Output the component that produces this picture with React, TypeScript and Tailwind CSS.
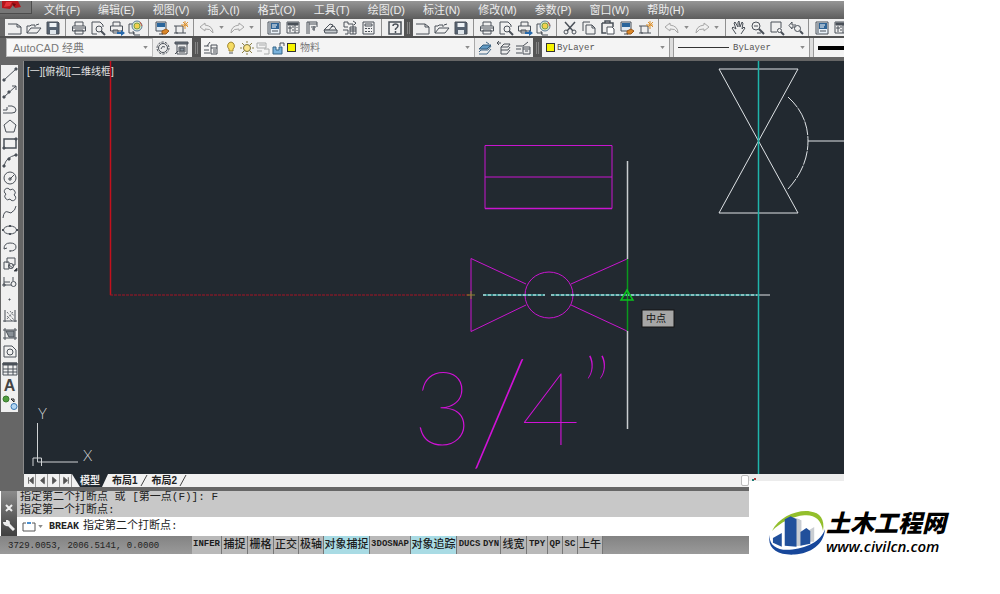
import type { ReactNode } from 'react';

const INK = '#4a5058';

const icons: Record<string, ReactNode> = {
  new: <path d="M1 4h9l4 3v7H1M10 4v3h4" />,
  open: <path d="M1 13V6h3l1-1h4v2M1 13l4-5h10l-4 5zM10 5l3-1" />,
  save: (
    <>
      <path d="M2 2h11l1 1v11H2z" fill="#566270" />
      <path d="M4.500 3h7v4h-7z" fill="#eef2f5" stroke="none" />
      <path d="M5 10h6v4H5z" fill="#dfe5ea" stroke="none" />
    </>
  ),
  print: (
    <>
      <path d="M4 6V2h8v4M1.500 7q0-1 1-1h11q1 0 1 1v4h-13zM4 10h8v4H4z" />
      <path d="M2 8h12" />
    </>
  ),
  preview: (
    <>
      <path d="M2 14V2h8l3 3v2M2 14h5" />
      <circle cx="9" cy="9" r="3" />
      <path d="M11 11l4 4" strokeWidth="2" />
    </>
  ),
  publish: (
    <>
      <path d="M4 6V2h7v4M1.500 6h12v5h-12zM4 10h5v3H4z" />
      <path d="M8 12h4v-2l4 3-4 3v-2H8z" fill="#2568ac" stroke="none" />
    </>
  ),
  globe: (
    <>
      <path d="M1 4v9h6M1 4h3" />
      <circle cx="9" cy="6" r="5" fill="#d9e6c8" stroke="#5c7d9b" />
      <circle cx="9" cy="6" r="3" fill="#f1d04e" stroke="#7b9e45" />
      <path d="M5 11l1 4h6" />
      <path d="M12 2l2 4" stroke="#cc5b40" />
    </>
  ),
  match: (
    <>
      <path d="M2 2h10v9H2z" fill="#dfe9f2" />
      <path d="M3 3h8v4H3z" fill="#2a659b" stroke="none" />
      <path d="M8 11l4-2 3 2-3 3H8z" fill="#d98627" stroke="#9c5a1c" />
      <path d="M5 14h4" />
    </>
  ),
  star: (
    <>
      <path d="M3 6h7v7H3zM1 13h4M10 13h3M1 6h2" />
      <path d="M12 1v8M8 5h7M10 2l5 5M15 2l-5 5" stroke="#dd912d" />
    </>
  ),
  undo: <path d="M6 3L1 7l5 4V9q5-1 8 4 0-7-8-8z" stroke="#a6a6a6" />,
  redo: <path d="M10 3l5 4-5 4V9q-5-1-8 4 0-7 8-8z" stroke="#a6a6a6" />,
  props: (
    <>
      <path d="M2 2h12v12H2z" fill="#e8f0f7" />
      <path d="M5 3h8v6H5z" fill="#2f6496" stroke="none" />
      <path d="M6 5h5M6 7h4" stroke="#fff" />
      <path d="M6 11h6M4 3v10" />
    </>
  ),
  design: (
    <>
      <path d="M2 2h12v11H2z" />
      <path d="M3 3h10v2H3z" fill={INK} />
      <path d="M4 7h2v2H4zM4 11h2M10 5v8M12 7v1M12 10v1M7 7h2M7 10h2" />
    </>
  ),
  palette: <path d="M3 14V2h10v5M5 2v12M5 4h8M7 7h5M8 9h3M10 6v5" />,
  sheet: (
    <>
      <path d="M1 10l6-6 3 1-4 5zM8 7l3-1 3 5" />
      <path d="M1 10h13v3H2z" fill="#c5cace" />
    </>
  ),
  markup: (
    <>
      <path d="M2 2h4v2h5v3M2 2v5h4M8 7h6v7H8z" />
      <path d="M8 9h6M8 11h6M11 7v7M1 10h5v4H3" />
      <path d="M11 1l3 2-2 2" />
    </>
  ),
  calc: (
    <>
      <path d="M2 2h11v12H2zM4 4h7v2H4z" />
      <path d="M4 8.500h7M4 11.500h7" strokeDasharray="2 1" />
    </>
  ),
  help: (
    <>
      <path d="M2 2h12v12H2z" strokeWidth="1.500" />
      <path d="M6 6q0-2 2.500-2T11 6q0 1-2.500 3v1M8.500 11v2" strokeWidth="1.500" />
    </>
  ),
  cut: (
    <>
      <path d="M3 2l8 9M13 2L5 11" strokeWidth="1.500" />
      <circle cx="4" cy="12" r="2" />
      <circle cx="12" cy="12" r="2" />
    </>
  ),
  copy: <path d="M2 11V2h7M5 14V5h6l3 3v6zM11 5v3h3" />,
  paste: (
    <>
      <path d="M2 3h11v4M2 3v10h4M5 3V1h5v2" strokeWidth="1.500" />
      <path d="M7 7h5l2 2v5H7z" fill="#fff" />
    </>
  ),
  hand: <path d="M5 14L1 8l1-1 3 2-2-6 1-1 3 5V2l1-1 1 6 2-5 1 1-1 6 2-2 1 1-4 6" />,
  zoom: (
    <>
      <circle cx="6" cy="6" r="4" />
      <path d="M9 9l5 5" strokeWidth="2" />
      <path d="M4 6h4M11 13h-4" />
    </>
  ),
  zoomWindow: (
    <>
      <path d="M2 2h10v6M2 2v10h6" />
      <circle cx="10.500" cy="10.500" r="2" />
      <path d="M12 12l3 3" strokeWidth="2" />
    </>
  ),
  zoomPrev: (
    <>
      <path d="M8 5H4V2L1 5.500 4 9V7h3" />
      <circle cx="9.500" cy="8.500" r="3" />
      <path d="M12 11l3 3" strokeWidth="2" />
    </>
  ),
  gear: (
    <>
      <circle cx="8" cy="8" r="6" strokeDasharray="2.500 1.200" />
      <circle cx="8" cy="8" r="4.500" />
      <path d="M6 9q1-4 4-2" />
    </>
  ),
  workspace: (
    <>
      <path d="M1 2h13v2H1z" fill="#6a737c" />
      <path d="M3 4v10h10V4M5 7h6v5H5zM1 14l3-3" />
      <path d="M6 8h4v3H6z" fill="#86919b" />
    </>
  ),
  layers: (
    <>
      <path d="M1 13h6M1 10h5M1 6h5M4 6l3-4" />
      <path d="M8 5h6v9H8zM8 8h6M10 10h3M10 12h3" />
    </>
  ),
  bulb: (
    <>
      <path d="M8 2a4 4 0 0 0-2 7v2h4V9a4 4 0 0 0-2-7z" fill="#f6dc63" stroke="#a28831" />
      <path d="M6 13h4" />
    </>
  ),
  sun: (
    <>
      <circle cx="8" cy="8" r="3.500" fill="#fae48a" stroke="#7d7438" />
      <path d="M8 1v2M8 13v2M1 8h2M13 8h2M3 3l2 2M11 11l2 2M13 3l-2 2M3 13l2-2" stroke="#8d8145" />
    </>
  ),
  freeze: <path d="M2 3h9v5H2zM2 11h5M9 9h5v5H9M4 5h6" stroke="#a8aaaa" />,
  lock: (
    <>
      <path d="M2 7v7h9V7H8v3H5V7z" fill="#79b2dc" stroke="#356486" />
      <path d="M9 6V3h4v3" />
    </>
  ),
  layerCurrent: (
    <>
      <path d="M2 9l4-4h8l-4 4z" fill="#6098c1" stroke="#335d7e" />
      <path d="M2 12l2-2h7l3-4M2 14h8l4-5M9 2l3 2" stroke="#406787" />
    </>
  ),
  layerPrev: <path d="M5 7l3-3h6l-2 3H5zM5 10h7l2-3M5 14h6l3-4M1 3h4M1 3l2-2M1 3l2 2M5 7v7" />,
  layerState: <path d="M1 6h7l5-4M1 9h5M1 13h6M8 7h7v7H8zM8 9h7M10 11h3" />,
  line: (
    <>
      <path d="M2 14L14 3" />
      <path d="M1 13h2v2H1zM13 2h2v2h-2z" fill={INK} />
    </>
  ),
  ray: (
    <>
      <path d="M2 14L14 3M10 3h4v4" />
      <path d="M1 13h2v2H1zM6 8h2v2H6z" fill={INK} />
    </>
  ),
  polyline: <path d="M1 13h9q4 0 4-3t-4-4H6M1 10h4V7" />,
  polygon: <path d="M8 2l6 5-2 7H4L2 7z" />,
  rect: (
    <>
      <path d="M2 4h12v9H2z" strokeWidth="1.500" />
      <path d="M1 12h2v2H1zM13 3h2v2h-2z" fill={INK} />
    </>
  ),
  arc: (
    <>
      <path d="M2 14Q4 5 14 3" />
      <path d="M1 13h2v2H1zM6 6h2v2H6zM13 2h2v2h-2z" fill={INK} />
    </>
  ),
  circle: (
    <>
      <circle cx="8" cy="8" r="6" />
      <path d="M8 9l4-4M7 8h2v2H7z" />
    </>
  ),
  cloud: <path d="M4 7a3 3 0 1 1 4-4 3 3 0 1 1 4 5 3 3 0 1 1-4 4 3 3 0 1 1-4-5z" />,
  spline: <path d="M1 14Q2 6 6 8t4 0q3-1 4-6" />,
  ellipse: (
    <>
      <ellipse cx="8" cy="8" rx="6.500" ry="4" />
      <path d="M8 3v2M8 11v2M1 7v2M15 7v2" strokeWidth="2" />
    </>
  ),
  ellipseArc: <path d="M2 10q0-6 6-6t6 4-6 4M2 10l3-1M8 11v2" />,
  insert: (
    <>
      <path d="M5 7V2h8v7h-3M2 6h5v7H2zM7 9l4 3" />
      <circle cx="9" cy="10" r="2.500" />
      <path d="M12 15h3v-3z" fill="#111" />
    </>
  ),
  block: (
    <>
      <path d="M2 3v8h7M2 8h6" />
      <circle cx="11.500" cy="10" r="2.500" />
      <path d="M1 10h2v2H1zM11 3v4" />
    </>
  ),
  point: <path d="M7 8h1v1H7z" />,
  hatch: (
    <>
      <path d="M3 2v12M13 2v12M1 13h14" />
      <path d="M5 4l7 8M5 8l5 5M8 3l4 5M5 11l6-7" strokeDasharray="1 1" />
    </>
  ),
  gradient: (
    <>
      <path d="M3 2v12M13 2v12M1 4h14M1 12h14" />
      <path d="M4 5h8v6H7z" fill="#899097" />
    </>
  ),
  region: (
    <>
      <path d="M2 3h8l4 4v7H2z" />
      <circle cx="8" cy="9" r="3" />
    </>
  ),
  table: (
    <>
      <path d="M1 2h14v12H1zM1 8h14M1 11h14M6 4v10M11 4v10" />
      <path d="M1 2h14v2H1z" fill={INK} />
    </>
  ),
  addSelected: (
    <>
      <circle cx="4" cy="4" r="3" fill="#4f9d3e" stroke="#3b7a2f" />
      <circle cx="12" cy="11.500" r="3" fill="#b3d6f3" stroke="#3676b4" />
      <path d="M9 4h3v3M9 4l3 3" stroke="#222" />
    </>
  ),
};

function Icon({ name }: { name: string }) {
  return (
    <svg
      viewBox="0 0 16 16"
      className="block size-4"
      fill="none"
      stroke={INK}
      strokeWidth="1"
      aria-hidden="true"
    >
      {icons[name]}
    </svg>
  );
}

// '|' is a separator, 'v' a small drop-down arrow
const STANDARD_TOOLS = [
  'new', 'open', 'save', '|', 'print', 'preview', 'publish', 'globe', '|', 'match', 'star', '|',
  'undo', 'v', 'redo', 'v', '|', 'props', 'design', 'palette', 'sheet', 'markup', 'calc', '|', 'help',
];

const SECOND_TOOLS = [
  'new', 'open', 'save', '|', 'print', 'preview', 'publish', 'globe', '|', 'cut', 'copy', 'paste',
  'match', 'star', '|', 'undo', 'v', 'redo', 'v', '|', 'hand', 'zoom', 'zoomWindow', 'zoomPrev', '|',
  'props', 'design',
];

const DRAW_TOOLS = [
  'line', 'ray', 'polyline', 'polygon', 'rect', 'arc', 'circle', 'cloud', 'spline', 'ellipse',
  'ellipseArc', 'insert', 'block', 'point', 'hatch', 'gradient', 'region', 'table', 'text', 'addSelected',
];

const MENUS = [
  '文件(F)', '编辑(E)', '视图(V)', '插入(I)', '格式(O)', '工具(T)',
  '绘图(D)', '标注(N)', '修改(M)', '参数(P)', '窗口(W)', '帮助(H)',
];

const STATUS_ITEMS = [
  { label: 'INFER', width: 'w-[30px]' },
  { label: '捕捉', width: 'w-[26px]' },
  { label: '栅格', width: 'w-[26px]' },
  { label: '正交', width: 'w-[25px]' },
  { label: '极轴', width: 'w-[25px]' },
  { label: '对象捕捉', width: 'w-[46px]', active: true },
  { label: '3DOSNAP', width: 'w-[41px]' },
  { label: '对象追踪', width: 'w-[46px]', active: true },
  { label: 'DUCS', width: 'w-[25px]', plain: true },
  { label: 'DYN', width: 'w-[19px]' },
  { label: '线宽', width: 'w-[26px]' },
  { label: 'TPY', width: 'w-[21px]' },
  { label: 'QP', width: 'w-[15px]' },
  { label: 'SC', width: 'w-[15px]' },
  { label: '上午', width: 'w-[25px]' },
];

function DownArrow() {
  return (
    <svg viewBox="0 0 6 4" className="block h-[3px] w-[5px] shrink-0" fill="#8b8b8b" aria-hidden="true">
      <path d="M0 0h6L3 4z" />
    </svg>
  );
}

function ToolStrip({ tools, className = '' }: { tools: string[]; className?: string }) {
  return (
    <div className={`flex h-[17px] items-center bg-[#efefef] ${className}`} role="toolbar">
      {tools.map((tool, i) => {
        if (tool === '|') {
          return (
            <span key={i} className="flex h-full w-[7px] shrink-0 justify-center">
              <span className="w-px bg-[#8f8f8f]" />
            </span>
          );
        }
        if (tool === 'v') {
          return (
            <button key={i} aria-label="More" className="flex w-[11px] shrink-0 justify-center">
              <DownArrow />
            </button>
          );
        }
        return (
          <button key={i} aria-label={tool} className="flex w-[19px] shrink-0 justify-center">
            <Icon name={tool} />
          </button>
        );
      })}
    </div>
  );
}

function Grip() {
  return (
    <span className="flex w-[9px] shrink-0 items-center justify-center gap-px bg-[#555]">
      <span className="h-3 w-px bg-[#858585]" />
      <span className="h-3 w-px bg-[#858585]" />
    </span>
  );
}

function MenuBar() {
  return (
    <nav className="flex h-[18px] overflow-hidden bg-linear-to-b from-[#969696] to-[#5d5d5d]">
      <button aria-label="Application menu" className="h-[13px] w-8 shrink-0 border-r border-b border-[#4c4c4c] bg-[#777]">
        <svg viewBox="0 0 32 13" className="block h-[13px] w-8" aria-hidden="true">
          <path d="M2 0h16l3 6-6 1-2-3-3 4-8-1z" fill="#b5161c" />
          <path d="M6 1h6l-2 4-6 1z" fill="#e4343a" />
          <path d="M12 2l4 1-2 3z" fill="#6d0c10" />
        </svg>
      </button>
      <div className="flex gap-[18px] pl-3">
        {MENUS.map((menu) => (
          <button key={menu} className="shrink-0 text-[11px] leading-4 whitespace-nowrap text-[#ededed]">
            {menu}
          </button>
        ))}
      </div>
    </nav>
  );
}

function PropertiesBar() {
  return (
    <div className="flex h-[19px] overflow-hidden pl-[6px]">
      <label className="flex w-[147px] shrink-0 items-center border border-[#bbb] bg-[#f7f7f7] pr-1">
        <select
          aria-label="Workspace"
          className="min-w-0 flex-1 appearance-none pl-[6px] font-['Liberation_Sans','Noto_Sans_CJK_SC',sans-serif] text-[11px] leading-4 text-[#777]"
        >
          <option>AutoCAD 经典</option>
        </select>
        <DownArrow />
      </label>
      <div className="flex w-[39px] shrink-0 items-center justify-around bg-[#ececec]">
        <button aria-label="Workspace settings"><Icon name="gear" /></button>
        <button aria-label="My workspace"><Icon name="workspace" /></button>
      </div>
      <Grip />
      <div className="flex w-[273px] shrink-0 items-center bg-[#f4f4f4] pr-1 pl-[2px]">
        <button aria-label="Layer properties" className="pr-1"><Icon name="layers" /></button>
        <Icon name="bulb" />
        <Icon name="sun" />
        <Icon name="freeze" />
        <Icon name="lock" />
        <span className="size-[9px] border border-[#333] bg-[#f8f500]" />
        <select
          aria-label="Layer"
          className="min-w-0 flex-1 appearance-none pl-1 text-[10px] leading-4 text-[#777]"
        >
          <option>物料</option>
        </select>
        <DownArrow />
      </div>
      <div className="flex w-[59px] shrink-0 items-center justify-around border-l border-[#aaa] bg-[#ececec]">
        <button aria-label="Make current"><Icon name="layerCurrent" /></button>
        <button aria-label="Previous layer"><Icon name="layerPrev" /></button>
        <button aria-label="Layer states"><Icon name="layerState" /></button>
      </div>
      <Grip />
      <label className="flex w-[127px] shrink-0 items-center bg-[#f4f4f4] pr-1 pl-1">
        <span className="size-[9px] border border-[#333] bg-[#f8f500]" />
        <select
          aria-label="Color"
          className="min-w-0 flex-1 appearance-none pl-[2px] font-['Liberation_Mono',monospace] text-[9px] leading-4 text-[#555]"
        >
          <option>ByLayer</option>
        </select>
        <DownArrow />
      </label>
      <span className="w-[5px] shrink-0 border-x border-[#999] bg-[#ddd]" />
      <label className="flex w-[135px] shrink-0 items-center bg-[#f4f4f4] pr-1 pl-1">
        <span className="h-px w-[51px] bg-[#333]" />
        <select
          aria-label="Linetype"
          className="min-w-0 flex-1 appearance-none pl-1 font-['Liberation_Mono',monospace] text-[9px] leading-4 text-[#555]"
        >
          <option>ByLayer</option>
        </select>
        <DownArrow />
      </label>
      <span className="w-[5px] shrink-0 border-x border-[#999] bg-[#ddd]" />
      <button aria-label="Lineweight" className="flex flex-1 items-center bg-[#f4f4f4] pl-1">
        <span className="h-1 w-full bg-black" />
      </button>
    </div>
  );
}

function Drawing() {
  return (
    <svg
      viewBox="24 61 820 413"
      className="block h-auto w-full overflow-visible bg-[#222930]"
      fill="none"
      strokeWidth="1"
      role="img"
      aria-label="Model space"
    >
      <text x="27" y="75" className="text-[10px]" fill="#e2e2e2">
        [一][俯视][二维线框]
      </text>

      <path d="M110.500 61V295" stroke="#c4101c" strokeWidth="1.500" />
      <path d="M110 295H471" stroke="#a51524" strokeDasharray="3 1" />

      <g stroke="#c915cf">
        <path d="M485 145.500H612V208.500H485zM485 177H612" />
        <path d="M485 208.500H612" strokeWidth="1.500" />
        <path d="M471 258.500V331.500L526 305M471 258.500L526 284" />
        <path d="M571 284L627 259M571 305L627 331" />
        <ellipse cx="549" cy="295" rx="24" ry="23" />
      </g>

      {/* pipe size label */}
      <g className="font-['Lato',sans-serif] font-thin" fill="#d012d6">
        <text x="413" y="445" className="text-[102px]">3</text>
        <text x="469" y="463" className="text-[144px]">/</text>
        <text x="521" y="445" className="text-[102px]">4</text>
        <text x="580" y="432" className="text-[102px]">”</text>
      </g>

      <g stroke="#dfe3e6">
        <path d="M719 69H798L719 213H798L719 69" />
        <path d="M788 97Q808 115 808 141T788 189" strokeDasharray="14 1" />
        <path d="M808 141H844" />
        <path d="M627.500 161V259M627.500 331V429" stroke="#c9cdd0" strokeWidth="1.500" />
        <path d="M757 295H770" />
      </g>

      <path d="M483 295H545M551 295H757" stroke="#3aa9a6" strokeWidth="1.500" />
      <path d="M483 295H545M551 295H757" stroke="#dff3f2" strokeDasharray="3 2" />
      <path d="M758.500 61V474" stroke="#1fb5ab" strokeWidth="1.500" />

      <path d="M627.500 259V331" stroke="#0a9a1d" strokeWidth="1.500" />
      <path d="M627 290L633 300H621z" stroke="#0ac41e" strokeWidth="1.500" />
      <path d="M467 295H475M471 291V299" stroke="#8a8a2c" />

      <g>
        <rect x="642" y="310" width="32" height="17" fill="#a6a6a6" stroke="#151515" />
        <text x="646" y="322" className="text-[10px]" fill="#111">中点</text>
      </g>

      {/* UCS icon */}
      <g stroke="#cfd2d4">
        <path d="M37.500 423V462H78M33 458H41.500V466M33 466V458" />
      </g>
      <g className="font-['Lato',sans-serif] text-[15px] font-light" fill="#cfd2d4">
        <text x="38" y="419">Y</text>
        <text x="83" y="461">X</text>
      </g>
    </svg>
  );
}

function DrawToolbar() {
  return (
    <aside className="flex w-6 shrink-0 flex-col border-r border-[#8a8a8a] bg-[#666] pt-1 pl-px">
      <div className="flex h-[347px] w-[17px] flex-col bg-[#f0f0f0]" role="toolbar">
        {DRAW_TOOLS.map((tool) => (
          <button key={tool} aria-label={tool} className="flex min-h-0 flex-1 items-center justify-center">
            {tool === 'text' ? (
              <span className="font-['Liberation_Sans',sans-serif] text-base leading-4 font-bold text-[#444]">A</span>
            ) : (
              <Icon name={tool} />
            )}
          </button>
        ))}
      </div>
    </aside>
  );
}

function LayoutTabs() {
  const arrows = ['M5 2v7M10 2L6 5.500 10 9z', 'M9 2L5 5.500 9 9z', 'M5 2l4 3.500L5 9z', 'M9 2v7M4 2l4 3.500L4 9z'];
  return (
    <div className="flex h-[13px] items-stretch bg-[#f1f1f1]">
      {arrows.map((d) => (
        <button key={d} aria-label="Scroll tabs" className="w-3 border-r border-[#999]">
          <svg viewBox="0 0 13 11" className="block h-[11px] w-3" fill="#555" stroke="#555" aria-hidden="true">
            <path d={d} />
          </svg>
        </button>
      ))}
      <div className="flex text-[10px] leading-[13px] font-bold text-[#222]" role="tablist">
        <button role="tab" aria-selected="true" className="flex bg-[#222930] text-[#eee]">
          <svg viewBox="0 0 8 13" className="h-[13px] w-2" fill="#f1f1f1" aria-hidden="true">
            <path d="M0 0l8 13H0z" />
          </svg>
          模型
          <svg viewBox="0 0 8 13" className="h-[13px] w-2" fill="#f1f1f1" aria-hidden="true">
            <path d="M8 0L2 13h6z" />
          </svg>
        </button>
        {['布局1', '布局2'].map((tab) => (
          <button key={tab} role="tab" aria-selected="false" className="flex pl-1">
            {tab}
            <svg viewBox="0 0 10 13" className="h-[13px] w-[10px]" stroke="#444" aria-hidden="true">
              <path d="M9 1L3 12" />
            </svg>
          </button>
        ))}
      </div>
      <span className="my-px ml-auto w-2 rounded-xs border border-[#bbb] bg-white" />
    </div>
  );
}

function CommandWindow() {
  return (
    <div className="flex h-[45px] pl-px">
      <div className="flex w-4 shrink-0 flex-col items-center bg-linear-to-b from-[#8b8b8b] to-[#3f3f3f] pt-3">
        <button aria-label="Close">
          <svg viewBox="0 0 10 10" className="block size-[10px]" stroke="#eee" strokeWidth="2" aria-hidden="true">
            <path d="M2 2l6 6M8 2L2 8" />
          </svg>
        </button>
        <button aria-label="Customize" className="mt-[6px]">
          <svg viewBox="0 0 12 12" className="block size-3" fill="none" stroke="#eee" strokeWidth="2" aria-hidden="true">
            <path d="M5 5l6 6" strokeWidth="3" />
            <path d="M4 1v3H1M1 3a3 3 0 0 0 4 3 3 3 0 0 0 0-4" />
          </svg>
        </button>
      </div>
      <div className="min-w-0 flex-1 font-['Liberation_Mono','Noto_Sans_CJK_SC',monospace] text-[11px] text-[#222]">
        <div className="h-[26px] overflow-hidden bg-[#c8c8c8] pl-[3px] leading-[13px] whitespace-nowrap">
          <p>指定第二个打断点 或 [第一点(F)]: F</p>
          <p>指定第一个打断点:</p>
        </div>
        <label className="flex h-[19px] items-center bg-white pl-[5px] whitespace-nowrap">
          <svg viewBox="0 0 14 10" className="h-[10px] w-[14px]" fill="none" stroke="#555" aria-hidden="true">
            <path d="M4 1H1v8h12V1h-3" />
            <path d="M5 1h4" stroke="#4a8fd0" strokeWidth="2" />
          </svg>
          <span className="px-[2px]"><DownArrow /></span>
          <b className="pl-1 text-[10px]">BREAK</b>
          <span className="pl-1">指定第二个打断点:</span>
          <input aria-label="Command" className="min-w-0 flex-1 outline-none" />
        </label>
      </div>
    </div>
  );
}

function StatusBar() {
  return (
    <footer className="flex h-[18px] overflow-hidden bg-linear-to-b from-[#838383] to-[#9a9a9a] pl-px font-['Liberation_Mono','Noto_Sans_CJK_SC',monospace]">
      <output className="w-[191px] shrink-0 pl-[7px] text-[9px] leading-[20px] whitespace-nowrap text-[#222]">
        3729.0053, 2006.5141, 0.0000
      </output>
      {STATUS_ITEMS.map(({ label, width, active, plain }) => {
        const latin = /[A-Z]/.test(label);
        return (
          <button
            key={label}
            className={`flex shrink-0 items-center justify-center overflow-hidden whitespace-nowrap text-[#1c1c1c] ${width} ${
              active ? 'bg-[#a9dbe4]' : 'bg-[#b9b9b9]'
            } ${plain ? '' : 'border-r border-[#777]'} ${latin ? 'text-[9px] font-bold' : 'text-[11px] font-medium'}`}
          >
            {label}
          </button>
        );
      })}
    </footer>
  );
}

function SiteLogo() {
  return (
    <a href="#" className="mt-7 ml-5 flex items-center">
      <svg viewBox="0 0 58 48" className="h-12 w-[57px] shrink-0" aria-hidden="true">
        <path d="M3 22C10 8 28 0 42 2c10 1 15 8 13 20C53 10 46 5 36 6 24 7 12 13 3 22z" fill="#93bf2c" />
        <path d="M20 10l4-2 7 2v27H20z" fill="#bcc6d2" />
        <path d="M27 9l6 2v26h-6zM41 21l5-3v15h-5z" fill="#c9cdd2" />
        <path d="M16 10l6-3 6 3v28l-12-1z" fill="#21509b" />
        <path d="M4 29l9-5v14l-9-4zM32 23l6-4 4 3v13l-10 2z" fill="#21509b" />
        <path d="M1 25c-2 10 6 17 20 16C37 40 53 33 57 20 56 36 42 45 26 46 9 47-3 40 1 25z" fill="#17479a" />
      </svg>
      <span className="flex flex-col gap-[2px] text-black italic">
        <span className="text-[24px] leading-6 font-black whitespace-nowrap">土木工程网</span>
        <span className="font-['Open_Sans',sans-serif] text-[15px] leading-4 font-semibold">www.civilcn.com</span>
      </span>
    </a>
  );
}

export default function App() {
  return (
    <main className="min-h-screen bg-white pt-px font-['Liberation_Sans','Noto_Sans_CJK_SC',sans-serif]">
      <div className="mr-[156px] bg-[#666]">
        <MenuBar />
        <div className="flex overflow-hidden pl-[5px]">
          <ToolStrip tools={STANDARD_TOOLS} className="shrink-0" />
          <Grip />
          <ToolStrip tools={SECOND_TOOLS} className="min-w-0 flex-1 overflow-hidden" />
        </div>
        <div className="h-[2px] bg-[#505050]" />
        <PropertiesBar />
        <div className="h-1" />
        <div className="flex">
          <DrawToolbar />
          <div className="min-w-0 flex-1">
            <Drawing />
          </div>
        </div>
      </div>

      <div className="flex items-start">
        <div className="min-w-0 flex-1">
          <div className="bg-[#666] pb-1 pl-6">
            <LayoutTabs />
          </div>
          <CommandWindow />
          <StatusBar />
        </div>
        <div className="w-[251px] shrink-0">
          <div className="h-[7px] w-[95px] bg-[#ececec] pt-1 pl-[3px]">
            <svg viewBox="0 0 4 3" className="block h-[3px] w-1" aria-hidden="true">
              <path d="M0 1h2v2H0z" fill="#1c7b74" />
              <path d="M2 0h2v2H2z" fill="#b13a3a" />
            </svg>
          </div>
          <SiteLogo />
        </div>
      </div>
    </main>
  );
}
